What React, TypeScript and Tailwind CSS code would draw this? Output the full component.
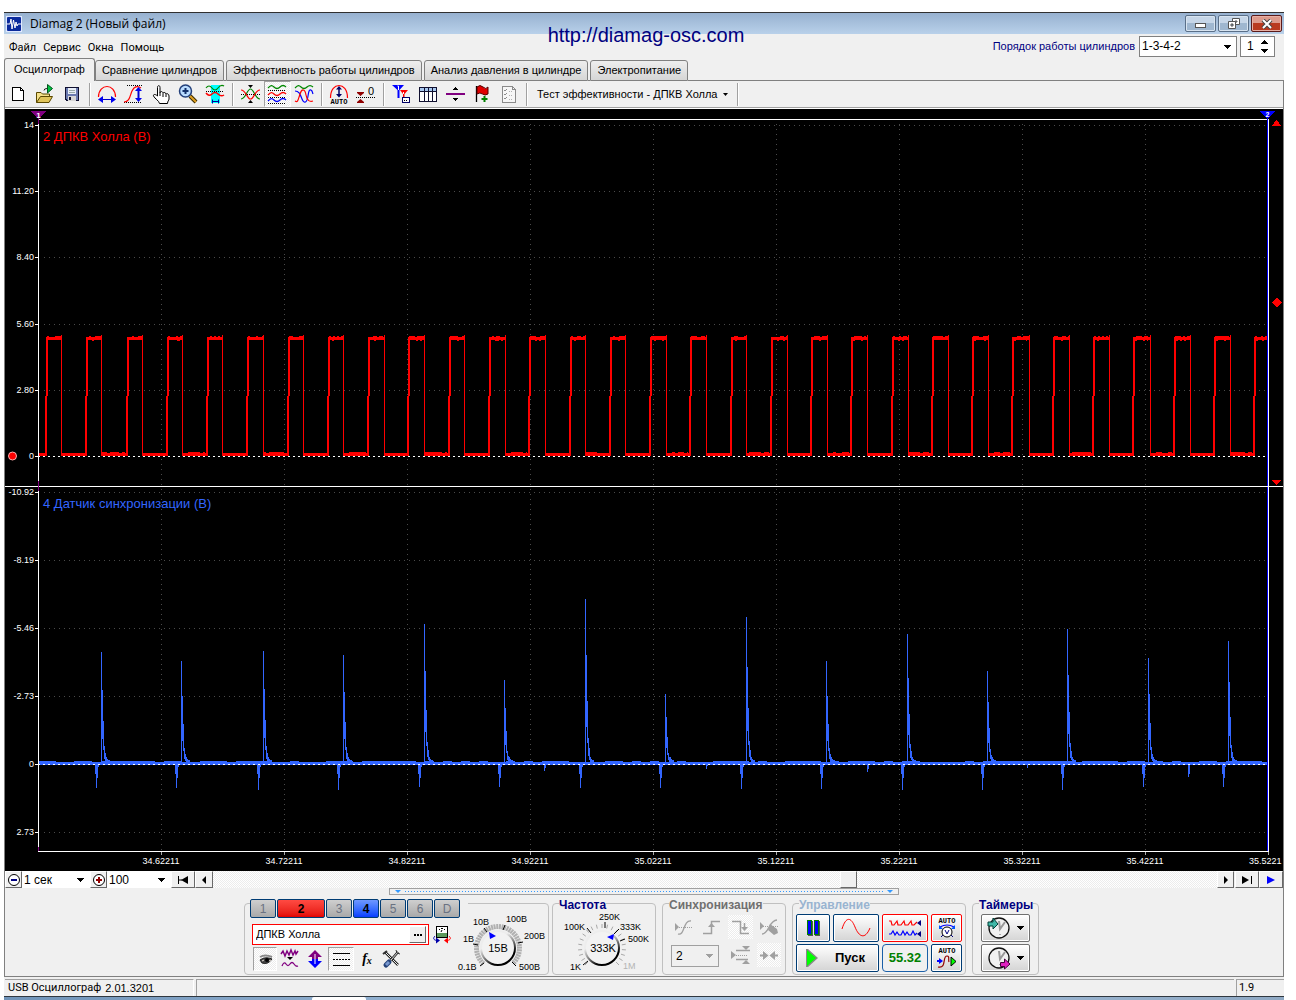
import React, { useState } from 'react';

const ui = 'font-["Liberation_Sans",Arial,sans-serif]';
const segoe = 'font-["Open_Sans","Noto_Sans",sans-serif]';
const tahoma = 'font-[Roboto,"Noto_Sans",sans-serif]';
const mono = 'font-["Liberation_Mono",monospace]';
const dither = 'bg-[repeating-conic-gradient(#ffffff_0_25%,#ececec_0_50%)] bg-size-[2px_2px]';

const menuItems = ['Файл', 'Сервис', 'Окна', 'Помощь'];

const tabs = [
    'Осциллограф',
    'Сравнение цилиндров',
    'Эффективность работы цилиндров',
    'Анализ давления в цилиндре',
    'Электропитание',
];

const channels = [
    { name: '1', look: 'w-[26px] text-gray-500 from-[#cfcfcf] to-[#a9a9a9]' },
    { name: '2', look: 'w-12 font-bold text-black from-[#ff4a42] to-[#e30000]' },
    { name: '3', look: 'w-[26px] text-gray-500 from-[#cfcfcf] to-[#a9a9a9]' },
    { name: '4', look: 'w-[26px] font-bold text-black from-[#6f97ff] to-[#0a3cff]' },
    { name: '5', look: 'w-[26px] text-gray-500 from-[#cfcfcf] to-[#a9a9a9]' },
    { name: '6', look: 'w-[26px] text-gray-500 from-[#cfcfcf] to-[#a9a9a9]' },
    { name: 'D', look: 'w-[26px] text-gray-500 from-[#cfcfcf] to-[#a9a9a9]' },
];

/* ---------- toolbar icons, all on a 24x24 field ---------- */

const Icon = ({ children, crisp = true, className = 'h-6 w-6' }: { children: React.ReactNode; crisp?: boolean; className?: string }) => (
    <svg viewBox="0 0 24 24" className={className} fill="none" shapeRendering={crisp ? 'crispEdges' : 'auto'} aria-hidden="true">
        {children}
    </svg>
);

const NewIcon = () => (
    <Icon>
        <path d="M6.5 5.5H14.5L17.5 8.5V18.5H6.5Z" fill="#fff" stroke="#000" />
        <path d="M14.5 5.5V8.5H17.5" stroke="#000" />
    </Icon>
);

const OpenIcon = () => (
    <Icon crisp={false}>
        <path d="M3.5 20.5V10.5H8L9.5 12H16.5V14" fill="#f4e08a" stroke="#5a4800" />
        <path d="M3.5 20.5L7.5 14.5H19.5L16 20.5Z" fill="#e0c45a" stroke="#5a4800" />
        <path d="M11 8.5Q11 6.500 14 6.500" stroke="#222" />
        <path d="M14.500 2.500V11L19.500 6.500Z" fill="#00c040" stroke="#00551b" />
    </Icon>
);

const SaveIcon = () => (
    <Icon>
        <path d="M5.5 5.5H18.5V18.5H7L5.5 17Z" fill="#6a7ab0" stroke="#101030" />
        <rect x="8" y="6" width="8" height="6" fill="#e8eef8" />
        <path d="M9 8.5H15M9 10.5H15" stroke="#9aa" />
        <rect x="8" y="14" width="8" height="5" fill="#d6d6d6" />
        <rect x="9" y="15" width="2" height="3" fill="#101030" />
    </Icon>
);

const WidthIcon = () => (
    <Icon crisp={false}>
        <path d="M3.500 15C3.500 8 8 4.500 12 4.500S20.500 8 20.500 15" stroke="#f00" strokeWidth="1.200" />
        <path d="M6 17.500H18" stroke="#00c" />
        <path d="M3 17.500L8 14V21ZM21 17.500L16 14V21Z" fill="#00e" />
    </Icon>
);

const HeightIcon = () => (
    <Icon crisp={false}>
        <path d="M5 3.500H21M2 20.500H20" stroke="#000" strokeDasharray="1 1" />
        <path d="M2 20C8 20 8 13 10 9C12 5 15 3 19 6" stroke="#f00" strokeWidth="1.200" />
        <path d="M16.500 8V18" stroke="#00c" strokeWidth="2" />
        <path d="M16.500 5L13 9H20ZM16.500 20L13 16H20Z" fill="#00e" />
    </Icon>
);

const HandIcon = () => (
    <Icon crisp={false}>
        <path
            d="M8.500 14V5.500C8.500 3 11 3 11 5.500V11C11 9 14 9 14 11.500C14 10 17 10 17 12.500C17 11 20 11.500 20 14V17C20 18.500 18.500 19 18.500 21.500H10.500C10 18.500 6 17 4.500 14C4 12 6.500 12 8.500 14Z"
            fill="#fff"
            stroke="#000"
        />
        <path d="M11 11V14M14 12V15M17 13V15" stroke="#000" />
    </Icon>
);

const ZoomIcon = () => (
    <Icon crisp={false}>
        <path d="M14 14L20 20" stroke="#3a2c00" strokeWidth="4" />
        <path d="M14 14L20 20" stroke="#e0a020" strokeWidth="2" />
        <circle cx="9.500" cy="9" r="6" fill="#b9dcff" stroke="#23407a" strokeWidth="1.500" />
        <path d="M9.500 6V12M6.500 9H12.500" stroke="#13306a" strokeWidth="2" />
    </Icon>
);

const RangeIcon = () => (
    <Icon crisp={false}>
        <rect x="8" y="3" width="9" height="18" fill="#0ff" />
        <path d="M3 6Q6 2 9 6T15 6T21 4" stroke="#080" strokeWidth="1.200" />
        <path d="M3 9.500H21" stroke="#000" strokeDasharray="1 1" />
        <path d="M3 11Q6 15 9 12T15 12T21 13" stroke="#f00" strokeWidth="1.500" />
        <path d="M9 19.500H16M9.500 17.500V21.500M15.500 17.500V21.500" stroke="#009" />
    </Icon>
);

const CrossIcon = () => (
    <Icon crisp={false}>
        <path d="M3 12.500H22" stroke="#000" strokeDasharray="1 1" />
        <path d="M3 17C8 17 9 7 12.500 7S17 17 22 17" stroke="#080" strokeWidth="1.200" />
        <path d="M3 8C8 8 9 17 12.500 17S17 8 22 8" stroke="#f00" strokeWidth="1.200" />
        <path d="M10 3H15L12.500 6ZM10 21H15L12.500 18Z" fill="#000" />
    </Icon>
);

const StackIcon = () => (
    <Icon crisp={false}>
        <path d="M3 8.500H21M3 15.500H21M3 21.500H21" stroke="#000" strokeDasharray="1 1" />
        <path d="M3 6C6 3 7 3 9 5S13 7 15 5S19 3 21 5" stroke="#080" strokeWidth="1.300" />
        <path d="M3 13C6 10 7 10 9 12S13 14 15 12S19 10 21 12" stroke="#f00" strokeWidth="1.300" />
        <path d="M3 19C6 16 7 16 9 18S13 20 15 18S19 16 21 18" stroke="#00f" strokeWidth="1.300" />
    </Icon>
);

const OverlayIcon = () => (
    <Icon crisp={false}>
        <path d="M3 6C6 3 7 3 9 5S13 7 15 5S19 3 21 5" stroke="#080" strokeWidth="1.200" />
        <path d="M3 9C7 9 8 12 10 17S15 21 16 14S18 7 20 9L21 12" stroke="#00f" strokeWidth="1.200" />
        <path d="M3 19C6 21 6 18 8 12S13 7 14 13S18 20 21 19" stroke="#f00" strokeWidth="1.200" />
    </Icon>
);

const AutoIcon = () => (
    <Icon crisp={false}>
        <path d="M3.500 16C3.500 7 8 3.500 12 3.500S20.500 7 20.500 16" stroke="#f00" strokeWidth="1.200" />
        <path d="M12 6V14" stroke="#006" strokeWidth="1.500" />
        <path d="M12 4L9 7.500H15ZM12 15.500L9 12H15Z" fill="#006" />
        <text x="12" y="22" textAnchor="middle" fontSize="7" fontWeight="bold" fill="#000" className={mono}>AUTO</text>
    </Icon>
);

const ZeroIcon = () => (
    <Icon crisp={false}>
        <path d="M2 15.500H21" stroke="#000" strokeDasharray="1 1" />
        <path d="M3 10H10V11L6.500 14L3 11ZM3 21H10V20L6.500 17L3 20Z" fill="#900000" />
        <text x="14" y="13" fontSize="11" fill="#000" className={ui}>0</text>
    </Icon>
);

const MarkersIcon = () => (
    <Icon crisp={false}>
        <path d="M3 3H15L10.500 8V16H8.500V8Z" fill="#00f" />
        <path d="M11 8H19L15.500 12V18H14V12Z" fill="#f00" />
        <path d="M8.500 4H9.500V8" stroke="#fff" />
        <path d="M14.500 10V12" stroke="#fff" />
        <rect x="13.500" y="15.500" width="7" height="5" fill="#fff" stroke="#006" />
        <path d="M15 18.500H19" stroke="#000" strokeDasharray="1 1" />
    </Icon>
);

const TableIcon = () => (
    <Icon>
        <rect x="3.500" y="5.500" width="17" height="14" fill="#fff" stroke="#101030" />
        <rect x="4" y="6" width="16" height="3" fill="#a8c8f0" />
        <path d="M4 9.500H20M8.500 6V19M12.500 6V19M16.500 6V19" stroke="#101030" />
    </Icon>
);

const DividerIcon = () => (
    <Icon>
        <rect x="3" y="11" width="19" height="2" fill="#800080" />
        <path d="M10 8H15L12.500 5ZM10 16H15L12.500 19Z" fill="#000" />
    </Icon>
);

const FlagIcon = () => (
    <Icon crisp={false}>
        <path d="M6.500 4V20" stroke="#000" strokeWidth="1.300" />
        <path d="M7 5Q10 2 13 5T18 5V12Q15 14 12.500 12T7 12Z" fill="#e00000" stroke="#500" />
        <path d="M14.500 14V20M11.500 17H17.500" stroke="#008000" strokeWidth="2" />
    </Icon>
);

const ChecklistIcon = () => (
    <Icon>
        <path d="M5.500 4.500H15.500L18.500 7.500V20.500H5.500Z" fill="#f6f6f6" stroke="#8a8a8a" />
        <path d="M15.500 4.500V7.500H18.500" stroke="#8a8a8a" />
        <path d="M7 8L8 9L10 7M7 12L8 13L10 11M7 16L8 17L10 15" stroke="#8a8a8a" />
        <path d="M12 9.500H16M12 13.500H16M12 17.500H16" stroke="#b0b0b0" strokeDasharray="1 1" />
    </Icon>
);

const toolGroups = [
    [
        { label: 'Новый', icon: <NewIcon /> },
        { label: 'Открыть', icon: <OpenIcon /> },
        { label: 'Сохранить', icon: <SaveIcon /> },
    ],
    [
        { label: 'Масштаб по времени', icon: <WidthIcon /> },
        { label: 'Масштаб по амплитуде', icon: <HeightIcon /> },
        { label: 'Перемещение', icon: <HandIcon /> },
        { label: 'Увеличение', icon: <ZoomIcon /> },
        { label: 'Выделение', icon: <RangeIcon /> },
    ],
    [
        { label: 'По центру', icon: <CrossIcon /> },
        { label: 'Раздельно', icon: <StackIcon />, pressed: true },
        { label: 'Совместно', icon: <OverlayIcon /> },
    ],
    [
        { label: 'Автомасштаб', icon: <AutoIcon /> },
        { label: 'Установить ноль', icon: <ZeroIcon /> },
    ],
    [
        { label: 'Маркеры', icon: <MarkersIcon /> },
        { label: 'Таблица', icon: <TableIcon /> },
        { label: 'Разделитель', icon: <DividerIcon /> },
        { label: 'Добавить метку', icon: <FlagIcon /> },
        { label: 'Отчёт', icon: <ChecklistIcon /> },
    ],
];

const Caret = ({ className = 'fill-black' }: { className?: string }) => (
    <svg viewBox="0 0 7 4" className={`h-1 w-[7px] ${className}`} shapeRendering="crispEdges" aria-hidden="true">
        <path d="M0 0H7L3.500 4Z" />
    </svg>
);

const Separator = () => (
    <div className="flex w-2 shrink-0 justify-center py-0.5">
        <div className="w-0.5 border-l border-[#a0a0a0] bg-white" />
    </div>
);

/* ---------- scope ---------- */

const timeMarks = [161, 284, 407, 530, 653, 776, 899, 1022, 1145, 1268];
const timeLabels = ['34.62211', '34.72211', '34.82211', '34.92211', '35.02211', '35.12211', '35.22211', '35.32211', '35.42211', '35.5221'];

const levels = [
    { y: 125, label: '14' },
    { y: 191, label: '11.20' },
    { y: 257, label: '8.40' },
    { y: 324, label: '5.60' },
    { y: 390, label: '2.80' },
    { y: 456, label: '0', zero: true },
    { y: 492, label: '-10.92' },
    { y: 560, label: '-8.19' },
    { y: 628, label: '-5.46' },
    { y: 696, label: '-2.73' },
    { y: 764, label: '0', zero: true },
    { y: 832, label: '2.73' },
];

const spikes = [
    [101, 652], [181, 661], [263, 651], [343, 655], [424, 624], [504, 680], [585, 599], [665, 694],
    [746, 617], [826, 661], [907, 634], [987, 671], [1067, 629], [1148, 658], [1228, 641],
];

const smallDips = [[544, 771], [706, 769], [867, 772], [1027, 768], [1188, 777]];

const hallPulses = Array.from({ length: 31 }, (_, k) => ({
    rise: Math.round(46 + 40.27 * k),
    fall: Math.min(Math.round(61 + 40.32 * k), 1267),
}));

const noise = (n: number) => {
    const v = Math.sin(n * 12.9898) * 43758.5453;
    return v - Math.floor(v);
};

// one-pixel thickening on a flat part of a trace, in runs of `run` pixels
const bumps = (from: number, to: number, y: number, run: number, share: number) => {
    let d = '';
    for (let x = from; x < to; x += run) {
        if (noise(x + y) < share) d += `M${x} ${y}h${Math.min(run, to - x)}v1h-${Math.min(run, to - x)}z`;
    }
    return d;
};

const hallPath = () => {
    let d = 'M38 453H46V456H38Z';
    hallPulses.forEach(({ rise, fall }, k) => {
        d += `M${rise - 1} 396h2V456h-2z`;
        d += `M${rise} 338h2V396h-2z`;
        d += `M${rise} 337H${fall}V340H${rise}Z` + bumps(rise + 1, fall, 336, 2, 0.6) + bumps(rise, fall - 2, 340, 2, 0.2);
        if (fall < 1267) {
            const next = hallPulses[k + 1].rise;
            d += `M${fall} 335h1V456h-1z`;
            d += `M${fall} 453H${next}V456H${fall}Z`;
            if (k % 2) d += bumps(fall + (k % 4 === 1 ? 0 : 6), next - 2, 452, 3, 0.75);
        }
    });
    return d;
};

const syncPath = () => {
    let d = 'M38 762H1267V765H38Z' + bumps(38, 1267, 761, 9, 0.6);
    spikes.forEach(([x, top]) => {
        const h = 763 - top;
        const bar = (dx: number, a: number, b: number) => `M${x + dx} ${Math.round(763 - h * a)}h1V${Math.round(763 - h * b)}h-1z`;
        d += bar(0, 1, 0) + bar(1, 0.66, 0.22) + bar(2, 0.38, 0.12) + bar(3, 0.15, 0.04) + bar(4, 0.09, 0.02);
        d += `M${x + 5} 757h1v5h-1zM${x + 6} 759h1v3h-1zM${x + 7} 760h2v2h-2z`;
        d += `M${x - 6} 763h1V774h-1zM${x - 5} 763h1V${787 + (x % 4)}h-1zM${x - 4} 763h1V778h-1zM${x - 3} 763h1V767h-1z`;
    });
    smallDips.forEach(([x, bottom]) => {
        d += `M${x} 763h1V${bottom}h-1zM${x + 1} 763h1V${bottom - 3}h-1z`;
    });
    return d;
};

const Scope = () => (
    <svg viewBox="5 109 1278 762" className={`block h-auto w-full bg-black ${ui}`} role="img" aria-label="Осциллограмма">
        <g shapeRendering="crispEdges">
            {levels.map(({ y, zero }) => !zero && (
                <path key={y} d={`M44 ${y + 0.5}H1267`} stroke="#4a4a4a" strokeDasharray="1 4" />
            ))}
            {timeMarks.slice(0, 9).map((x) => (
                <path key={x} d={`M${x + 0.5} 124V850`} stroke="#4a4a4a" strokeDasharray="1 4" />
            ))}
            <path d={hallPath()} fill="#ff0000" />
            <path d={syncPath()} fill="#3366ff" />
            <path d="M38 456.500H1267M38 764.500H1267" stroke="#fff" strokeDasharray="2 3" />
            <path d="M38 119.500H1269M5 486.500H1283M38 851.500H1269M38.500 119V851M1268.500 119V851" stroke="#fff" />
            <path d="M1267.500 116V486M1267.500 487V851" stroke="#0000ff" />
            <path d="M38.500 115V124M38.500 481V491M38.500 847V851" stroke="#800080" />
            {timeMarks.map((x) => (
                <path key={x} d={`M${x + 0.5} 852V855`} stroke="#aaa" />
            ))}
            {levels.map(({ y }) => (
                <path key={y} d={`M35 ${y + 0.5}H38`} stroke="#fff" />
            ))}
            <path d="M31 111H46L39 119H38Z" fill="#800080" />
            <path d="M1260 111H1275L1268 119H1267Z" fill="#0000ff" />
            <path d="M1272 125.500L1276.500 120L1281 125.500Z" fill="#ff0000" />
            <path d="M1271.500 302.500L1276.500 297.500L1281.500 302.500L1276.500 307.500Z" fill="#ff0000" />
            <path d="M1272 480L1276.500 485.500L1281 480Z" fill="#ff0000" />
        </g>
        <circle cx="12.500" cy="456" r="4" fill="#ff0000" stroke="#ffb0b0" />
        <text x="38.500" y="118" fontSize="8" fontWeight="bold" fill="#fff" textAnchor="middle">1</text>
        <text x="1267.500" y="117" fontSize="7" fontWeight="bold" fill="#fff" textAnchor="middle">2</text>
        <g fontSize="9" fill="#fff">
            {levels.map(({ y, label }) => (
                <text key={y} x="34" y={y + 3} textAnchor="end">{label}</text>
            ))}
            {timeLabels.map((label, i) => (
                <text key={label} x={i === 9 ? 1249 : timeMarks[i]} y="864" textAnchor={i === 9 ? 'start' : 'middle'}>{label}</text>
            ))}
        </g>
        <text x="43" y="141" fontSize="13" fill="#ff0000">2 ДПКВ Холла (В)</text>
        <text x="43" y="508" fontSize="13" fill="#3366ff">4 Датчик синхронизации (В)</text>
    </svg>
);

/* ---------- knobs ---------- */

const ring = (cx: number, cy: number, r1: number, r2: number, step: number) => {
    let d = '';
    for (let a = -225; a <= 45; a += step) {
        const c = Math.cos((a * Math.PI) / 180);
        const s = Math.sin((a * Math.PI) / 180);
        d += `M${(cx + r1 * c).toFixed(1)} ${(cy + r1 * s).toFixed(1)}L${(cx + r2 * c).toFixed(1)} ${(cy + r2 * s).toFixed(1)}`;
    }
    return d;
};

const KnobFace = ({ cx, cy }: { cx: number; cy: number }) => (
    <>
        <defs>
            <linearGradient id={`rim${cx}`} x1="0.200" y1="0" x2="0.800" y2="1">
                <stop offset="0.300" stopColor="#ededed" />
                <stop offset="0.500" stopColor="#999" />
                <stop offset="0.800" stopColor="#000" />
            </linearGradient>
        </defs>
        <circle cx={cx} cy={cy} r="17" fill="#f2f2f2" stroke={`url(#rim${cx})`} strokeWidth="2" />
    </>
);

const VoltKnob = () => (
    <svg viewBox="456 909 90 63" className={`mt-[5px] h-[63px] w-[90px] shrink-0 ${ui}`} role="img" aria-label="Диапазон 15В">
        <path d={ring(498, 948, 19, 24, 7)} stroke="#b0b0b0" strokeWidth="2" />
        <path d="M480 966L484 963M473 944L478 945M484 928L487 932M505 925L503 930M523 942L518 943M516 966L512 962" stroke="#000" />
        <KnobFace cx={498} cy={948} />
        <path d="M489 932L496 936L490 939Z" fill="#0000ff" />
        <g fontSize="9" fill="#000">
            <text x="458" y="970">0.1В</text>
            <text x="463" y="942">1В</text>
            <text x="473" y="925">10В</text>
            <text x="506" y="922">100В</text>
            <text x="524" y="939">200В</text>
            <text x="519" y="970">500В</text>
        </g>
        <text x="498" y="952" fontSize="11" textAnchor="middle">15В</text>
    </svg>
);

const FreqKnob = () => (
    <svg viewBox="556 911 97 62" className={`ml-[3px] h-[62px] w-[97px] ${ui}`} role="img" aria-label="Частота 333K">
        <path d={ring(602, 948, 20, 24, 13.500)} stroke="#a8a8a8" />
        <path d="M583 965L588 961M587 928L591 933M605 922V928M619 929L614 934M625 939L620 941" stroke="#000" />
        <KnobFace cx={602} cy={948} />
        <path d="M607 937L614 934L613 940Z" fill="#0000ff" />
        <g fontSize="9" fill="#000">
            <text x="570" y="970">1K</text>
            <text x="564" y="930">100K</text>
            <text x="599" y="920">250K</text>
            <text x="620" y="930">333K</text>
            <text x="628" y="942">500K</text>
            <text x="623" y="969" fill="#b4b4b4">1M</text>
        </g>
        <text x="603" y="952" fontSize="11" textAnchor="middle">333K</text>
    </svg>
);

/* ---------- bottom panel ---------- */

const Group = ({ title, color, className, children }: { title: string; color: string; className: string; children: React.ReactNode }) => (
    <fieldset className={`h-[79px] shrink-0 rounded border border-[#c0c0c0] ${className}`}>
        <legend className={`ml-1.5 pt-[3px] text-xs leading-3 font-bold whitespace-nowrap ${color}`}>{title}</legend>
        {children}
    </fieldset>
);

const faceButton = 'flex h-7 items-center justify-center rounded-[2px] border bg-linear-to-b from-white to-[#d4d4d4] shadow-[inset_0_0_0_1px_#ffffff]';

const ChannelGroup = () => {
    const [name, setName] = useState('ДПКВ Холла');
    return (
        <div className="mt-2 flex h-[72px] w-[305px] shrink-0 rounded border border-[#c0c0c0] pl-[5px]">
            <div className="w-[206px] shrink-0">
                <div className="relative -mt-[5px] flex w-[218px] gap-px bg-[#f0f0f0]">
                    {channels.map((c) => (
                        <button
                            key={c.name}
                            className={`h-[19px] rounded-[2px] border border-[#003c74] bg-linear-to-b text-xs leading-none ${c.look}`}
                        >
                            {c.name}
                        </button>
                    ))}
                </div>
                <div className="mt-1.5 flex items-center gap-1 pl-0.5">
                    <div className="flex h-[21px] w-[177px] items-center border border-[#ff0000] bg-white pr-0.5">
                        <input
                            aria-label="Имя канала"
                            className="min-w-0 flex-1 pl-[3px] text-[11px] outline-none"
                            value={name}
                            onChange={(e) => setName(e.target.value)}
                        />
                        <button
                            aria-label="Выбрать"
                            className="flex h-[17px] w-[17px] items-center justify-center gap-px border border-r-[#696969] border-b-[#696969] border-l-white border-t-white bg-[#f0f0f0]"
                        >
                            <svg viewBox="0 0 8 2" className="h-0.5 w-2" aria-hidden="true">
                                <path d="M0 0H2V2H0ZM3 0H5V2H3ZM6 0H8V2H6Z" />
                            </svg>
                        </button>
                    </div>
                    <button aria-label="Датчик">
                        <svg viewBox="0 0 18 20" className="h-5 w-[18px]" fill="none" aria-hidden="true">
                            <rect x="3.500" y="1.500" width="11" height="11" fill="#fff" stroke="#000" />
                            <rect x="4" y="8" width="10" height="4" fill="#5c9a5c" />
                            <path d="M6 4.500H7M8 3.500H10M11 4.500H12M8 7L9 5" stroke="#000" />
                            <path d="M2 11C0 13 0 15 4 15.500" stroke="#00a" />
                            <path d="M3 12.500L7 15.500L3 18.500Z" fill="#00a" />
                            <path d="M16 11C18 13 18 15 14 15.500" stroke="#f00" />
                            <path d="M15 12.500L11 15.500L15 18.500Z" fill="#f00" />
                        </svg>
                    </button>
                </div>
                <div className="mt-0.5 flex h-6 items-center gap-px pl-[3px]">
                    <button aria-label="Показать канал" className={`h-6 w-6 border border-t-[#a0a0a0] border-l-[#a0a0a0] border-r-white border-b-white ${dither}`}>
                        <svg viewBox="0 0 22 22" className="h-full w-full" fill="none" aria-hidden="true">
                            <path d="M6 9Q11 6 18 9" stroke="#888" strokeWidth="2" />
                            <path d="M6 12Q11 8 18 11Q14 17 8 15Z" fill="#444" stroke="#222" />
                            <circle cx="13" cy="12" r="2" fill="#000" />
                            <path d="M8 13L10 12M15 13L17 12" stroke="#e8e0d8" />
                        </svg>
                    </button>
                    <button aria-label="Фильтр">
                        <Icon crisp={false}>
                            <path d="M3 7L5 4L7 9L9 4L11 8L13 3L15 8L17 4L18 7L20 4" stroke="#800080" strokeWidth="1.500" />
                            <path d="M9 10H15L12 13Z" fill="#000" />
                            <path d="M4 19Q6 14 8 17T12 17T16 17T20 19" stroke="#800080" strokeWidth="1.300" />
                        </Icon>
                    </button>
                    <button aria-label="Инвертировать">
                        <Icon crisp={false}>
                            <path d="M12 3L19 10H15V12H9V10H5Z" fill="#800080" />
                            <path d="M12 21L19 14H15V12H9V14H5Z" fill="#0000ff" />
                            <path d="M12 7V17" stroke="#fff" />
                        </Icon>
                    </button>
                    <button aria-label="Линии" className={`h-6 w-[26px] border border-t-[#a0a0a0] border-l-[#a0a0a0] border-r-white border-b-white ${dither}`}>
                        <svg viewBox="0 0 24 22" className="h-full w-full" shapeRendering="crispEdges" aria-hidden="true">
                            <path d="M4 5.500H21M4 17.500H21" stroke="#000" />
                            <path d="M4 11.500H21" stroke="#000" strokeDasharray="2 1" />
                        </svg>
                    </button>
                    <button aria-label="Функция" className='flex h-6 w-6 items-center justify-center font-["Liberation_Serif",serif] text-sm font-bold italic'>
                        f<span className="mt-1 text-[10px]">x</span>
                    </button>
                    <button aria-label="Настройки">
                        <Icon crisp={false}>
                            <path d="M5 5L18 18" stroke="#222" strokeWidth="2.500" />
                            <path d="M5 5L18 18" stroke="#eee" />
                            <path d="M3 7L7 4" stroke="#333" strokeWidth="2" />
                            <path d="M18 5L11 13" stroke="#222" strokeWidth="2.500" />
                            <path d="M18 5L11 13" stroke="#ddd" />
                            <path d="M16 3L17 6L20 7" stroke="#333" />
                            <path d="M9 15L6 18" stroke="#24427a" strokeWidth="5" strokeLinecap="round" />
                            <path d="M9 15L6 18" stroke="#7898d0" strokeWidth="3" />
                        </Icon>
                    </button>
                </div>
            </div>
            <VoltKnob />
        </div>
    );
};

const SyncGroup = () => (
    <Group title="Синхронизация" color="text-[#707070]" className="w-[124px]">
        <div className="grid grid-cols-4 gap-x-1 gap-y-1 pt-1 pr-1 pl-2">
            <button disabled aria-label="Уровень">
                <Icon crisp={false}>
                    <path d="M4 8V16L8 12Z" fill="#a0a0a0" />
                    <path d="M6 12.500H21" stroke="#a0a0a0" strokeDasharray="1 1" />
                    <path d="M7 19C14 21 12 5 20 6" stroke="#a0a0a0" strokeWidth="1.300" />
                </Icon>
            </button>
            <button disabled aria-label="По фронту">
                <Icon crisp={false}>
                    <path d="M3 18.500H11.500V6.500H20" stroke="#a0a0a0" strokeWidth="1.500" />
                    <path d="M8 12H15L11.500 8Z" fill="#a0a0a0" />
                </Icon>
            </button>
            <button disabled aria-label="По спаду" className={dither}>
                <Icon crisp={false}>
                    <path d="M4 6.500H12.500V18.500H21M16.500 8V14" stroke="#a0a0a0" strokeWidth="1.500" />
                    <path d="M13 12H20L16.500 16Z" fill="#a0a0a0" />
                </Icon>
            </button>
            <button disabled aria-label="Указать">
                <Icon crisp={false}>
                    <path d="M3 7V15L7 11ZM13 9L20 14L21 18L17 20L11 15Z" fill="#a0a0a0" />
                    <path d="M6 11.500H21" stroke="#a0a0a0" strokeDasharray="1 1" />
                    <path d="M5 19C12 19 12 5 20 5" stroke="#a0a0a0" strokeWidth="1.300" />
                </Icon>
            </button>
            <div className="relative col-span-2 mt-0.5 h-[22px] w-12">
                <select disabled aria-label="Канал синхронизации" className="h-full w-full appearance-none border border-[#a0a0a0] bg-[#f0f0f0] pl-1 text-xs text-black opacity-100">
                    <option>2</option>
                </select>
                <span className="pointer-events-none absolute top-[9px] right-1.5 flex"><Caret className="fill-[#a0a0a0]" /></span>
            </div>
            <button disabled aria-label="Диапазон">
                <Icon crisp={false}>
                    <path d="M3 8V16L8 12ZM14 3H22L18 7ZM14 21H22L18 17Z" fill="#a0a0a0" />
                    <path d="M8 7.500H22M8 16.500H20" stroke="#a0a0a0" strokeWidth="1.500" />
                    <path d="M8 12.500H20" stroke="#a0a0a0" strokeDasharray="1 1" />
                </Icon>
            </button>
            <button disabled aria-label="По центру" className={dither}>
                <Icon crisp={false}>
                    <path d="M3 12.500H9M15 12.500H21" stroke="#a0a0a0" strokeWidth="2" />
                    <path d="M6 8L11.500 12.500L6 17ZM18 8L12.500 12.500L18 17Z" fill="#a0a0a0" />
                </Icon>
            </button>
        </div>
    </Group>
);

const ControlGroup = () => (
    <Group title="Управление" color="text-[#99b4d1]" className="w-[174px]">
        <div className="grid grid-cols-[34px_46px_46px_31px] gap-x-[3px] gap-y-0.5 pt-[3px] pl-[3px]">
            <button aria-label="Пауза" className={`${faceButton} border-[#003c74]`}>
                <svg viewBox="0 0 13 16" className="h-4 w-[13px]" shapeRendering="crispEdges" aria-hidden="true">
                    <path d="M1 1H6V16H1ZM8 1H13V16H8Z" fill="#555" />
                    <path d="M0 0H5V15H0ZM7 0H12V15H7Z" fill="#008000" />
                    <path d="M1 1H4V14H1ZM8 1H11V14H8Z" fill="#0000ff" />
                </svg>
            </button>
            <button aria-label="Сигнал" className={`${faceButton} border-[#003c74]`}>
                <svg viewBox="0 0 30 20" className="h-5 w-[30px]" fill="none" aria-hidden="true">
                    <path d="M1 11C5 -2 10 -1 14 9S24 22 29 10" stroke="#ff0000" />
                </svg>
            </button>
            <button aria-label="Каналы" className={`${faceButton} border-[#ff0000]`}>
                <svg viewBox="0 0 34 20" className="h-5 w-[34px]" fill="none" aria-hidden="true">
                    <path d="M1 3H3L4 7H6L9 3L10 7H13L16 3L17 7H20L23 3L24 7H26L29 4" stroke="#ff0000" strokeWidth="1.200" />
                    <path d="M1 16H3L5 13L7 17L9 14L11 17H13L15 13L17 17L19 14L21 17H23L25 13L27 17L29 15" stroke="#0000ff" strokeWidth="1.200" />
                    <path d="M33 2V8L29 5ZM33 13V19L29 16Z" fill="#000080" />
                </svg>
            </button>
            <button aria-label="Авто диапазон" className={`${faceButton} border-[#ff0000]`}>
                <svg viewBox="0 0 24 24" className="h-6 w-6" fill="none" aria-hidden="true">
                    <text x="12" y="7" fontSize="7" fontWeight="bold" fill="#000" textAnchor="middle" className={mono}>AUTO</text>
                    <path d="M5 11Q12 7 19 11" stroke="#0000ff" strokeWidth="1.200" />
                    <path d="M4 9V13H8ZM20 9V13H16Z" fill="#0055ff" />
                    <circle cx="12" cy="16" r="5" fill="#fff" stroke="#000" />
                    <path d="M10 14L12 18L14 14M6 21L8 19M18 21L16 19" stroke="#000080" />
                </svg>
            </button>
            <button className={`${faceButton} col-span-2 border-[#003c74] pr-1 text-[13px] font-bold`}>
                <svg viewBox="0 0 12 18" className="mr-[17px] h-[18px] w-3" aria-hidden="true">
                    <path d="M0 0H2L12 9L2 18H0Z" fill="#888" />
                    <path d="M1 1L10 9L1 17Z" fill="#00ff00" />
                </svg>
                Пуск
            </button>
            <output className="flex h-7 items-center justify-center rounded border border-[#1a5fa8] text-[13px] font-bold text-[#008000]">55.32</output>
            <button aria-label="Авто запуск" className={`${faceButton} border-[#003c74]`}>
                <svg viewBox="0 0 24 24" className="h-6 w-6" fill="none" aria-hidden="true">
                    <text x="12" y="7" fontSize="7" fontWeight="bold" fill="#000" textAnchor="middle" className={mono}>AUTO</text>
                    <path d="M2 15H6" stroke="#0000ff" strokeWidth="2" />
                    <path d="M4 12V18L8 15Z" fill="#0000ff" />
                    <path d="M3 21C12 23 7 10 12 10C15 10 13 14 14 16" stroke="#900000" strokeWidth="1.200" />
                    <path d="M16 11V20L21 15.500Z" fill="#00ff00" stroke="#000" />
                </svg>
            </button>
        </div>
    </Group>
);

const TimerButton = ({ label, out }: { label: string; out?: boolean }) => (
    <button aria-label={label} className={`${faceButton} w-[49px] gap-1 border-[#707070]`}>
        <svg viewBox="0 0 26 24" className="h-6 w-[26px]" fill="none" aria-hidden="true">
            <circle cx="12" cy="12" r="10" fill="#f0f0f0" stroke="#111" strokeWidth="1.300" />
            <path d="M12 5L13 13L18 6" stroke="#999" strokeWidth="2" />
            <path d="M12 18.500H14" stroke="#aaa" />
            {out ? (
                <path d="M13.500 16.500H17.500V13L23 18L17.500 23V20.500H13.500Z" fill="#e020c0" stroke="#400038" />
            ) : (
                <path d="M1 6H6V2L11 8L6 13V10H1Z" fill="#40b8a8" stroke="#004038" />
            )}
        </svg>
        <Caret />
    </button>
);

const scrollButton = 'flex h-[17px] shrink-0 items-center justify-center border border-t-white border-l-white border-r-[#696969] border-b-[#696969] bg-[#f0f0f0]';

const ScrollRow = () => (
    <div className="flex h-[17px] text-xs">
        <button aria-label="Уменьшить" className={`${scrollButton} w-[17px]`}>
            <svg viewBox="0 0 14 14" className="h-3.5 w-3.5 shrink-0" fill="none" aria-hidden="true">
                <circle cx="7" cy="7" r="5.500" fill="#fff" stroke="#000" />
                <path d="M4 7H10" stroke="#000080" strokeWidth="2" />
            </svg>
        </button>
        <div className="relative w-[68px]">
            <select aria-label="Развёртка" className="h-full w-full appearance-none bg-white pl-0.5">
                <option>1 сек</option>
            </select>
            <span className="pointer-events-none absolute top-[7px] right-1.5 flex"><Caret /></span>
        </div>
        <button aria-label="Увеличить" className={`${scrollButton} w-[17px]`}>
            <svg viewBox="0 0 14 14" className="h-3.5 w-3.5 shrink-0" fill="none" aria-hidden="true">
                <circle cx="7" cy="7" r="5.500" fill="#fff" stroke="#000" />
                <path d="M4 7H10M7 4V10" stroke="#900000" strokeWidth="2" />
            </svg>
        </button>
        <div className="relative w-16">
            <select aria-label="Масштаб" className="h-full w-full appearance-none bg-white pl-0.5">
                <option>100</option>
            </select>
            <span className="pointer-events-none absolute top-[7px] right-1.5 flex"><Caret /></span>
        </div>
        <button aria-label="В начало" className={`${scrollButton} w-6`}>
            <svg viewBox="0 0 10 8" className="h-2 w-2.5" aria-hidden="true"><path d="M0 0H1V8H0ZM10 0V8L3 4Z" /><path d="M1 3.500H4V4.500H1Z" /></svg>
        </button>
        <button aria-label="Назад" className={`${scrollButton} w-[18px]`}>
            <svg viewBox="0 0 4 8" className="h-2 w-1" aria-hidden="true"><path d="M4 0V8L0 4Z" /></svg>
        </button>
        <div className={`flex flex-1 ${dither}`}>
            <div className="grow-[627]" />
            <div className={`${scrollButton} w-[17px]`} />
            <div className="grow-[360]" />
        </div>
        <button aria-label="Вперёд" className={`${scrollButton} w-[17px]`}>
            <svg viewBox="0 0 4 8" className="h-2 w-1" aria-hidden="true"><path d="M0 0V8L4 4Z" /></svg>
        </button>
        <button aria-label="В конец" className={`${scrollButton} ml-px w-6`}>
            <svg viewBox="0 0 10 8" className="h-2 w-2.5" aria-hidden="true"><path d="M10 0H9V8H10ZM0 0V8L7 4Z" /></svg>
        </button>
        <button aria-label="Следить" className={`${scrollButton} w-6`}>
            <svg viewBox="0 0 8 8" className="h-2 w-2 fill-[#0000ff]" aria-hidden="true"><path d="M0 0V8L8 4Z" /></svg>
        </button>
    </div>
);

const TitleBar = () => (
    <div className="flex h-[22px] items-center border-t border-[#303030] bg-linear-to-b from-[#97b1d0] to-[#b9d1ea] pr-0.5 pl-0.5">
        <svg viewBox="0 0 16 16" className="h-4 w-4" fill="none" aria-hidden="true">
            <rect width="16" height="16" fill="#dfe8ff" />
            <rect x="1" y="1" width="14" height="14" rx="1" fill="#0a2a9c" />
            <path d="M1 8H4L5 3L6 13L7.500 4L9 12L10 6L11 10L12 8H15" stroke="#fff" />
        </svg>
        <span className={`ml-2 text-xs leading-4 ${segoe}`}>Diamag 2 (Новый файл)</span>
        <div className="ml-auto flex gap-0.5">
            <button aria-label="Свернуть" className="flex h-[17px] w-[31px] items-center justify-center rounded-[2px] border border-[#5a6f88] bg-linear-to-b from-[#c6d6e8] from-50% to-[#9fb7d0] to-50% shadow-[inset_0_0_0_1px_#d8e4f0]">
                <svg viewBox="0 0 11 5" className="mt-1 h-[5px] w-[11px]" aria-hidden="true"><rect x="0.500" y="0.500" width="10" height="4" fill="#fff" stroke="#555" /></svg>
            </button>
            <button aria-label="Восстановить" className="flex h-[17px] w-[31px] items-center justify-center rounded-[2px] border border-[#5a6f88] bg-linear-to-b from-[#c6d6e8] from-50% to-[#9fb7d0] to-50% shadow-[inset_0_0_0_1px_#d8e4f0]">
                <svg viewBox="0 0 12 11" className="h-[11px] w-3" aria-hidden="true">
                    <path d="M4.500 0.500H11.500V6.500H4.500ZM7 3V4H9V3Z" fill="#fff" stroke="#555" />
                    <path d="M0.500 3.500H7.500V10.500H0.500ZM3 6V8H5V6Z" fill="#fff" stroke="#555" />
                </svg>
            </button>
            <button aria-label="Закрыть" className="flex h-[17px] w-[31px] items-center justify-center rounded-[2px] border border-[#5a1a1a] bg-linear-to-b from-[#dd9a8c] from-50% to-[#b93a20] to-50% shadow-[inset_0_0_0_1px_#e8b0a4]">
                <svg viewBox="0 0 12 10" className="h-2.5 w-3" fill="none" aria-hidden="true">
                    <path d="M2 1L10 9M10 1L2 9" stroke="#444" strokeWidth="4" />
                    <path d="M2 1L10 9M10 1L2 9" stroke="#fff" strokeWidth="2" />
                </svg>
            </button>
        </div>
    </div>
);

const App = () => {
    const [activeTab, setActiveTab] = useState(0);
    const [cylinder, setCylinder] = useState(1);

    return (
        <div className={`bg-white pt-3 pr-3 pl-1 text-xs text-black ${ui}`}>
            <div className="relative bg-[#f0f0f0]">
                <TitleBar />
                <a href="http://diamag-osc.com" className="absolute top-[11px] left-1/2 -translate-x-1/2 pl-1 text-xl leading-6 text-[#000080]">
                    http://diamag-osc.com
                </a>

                <div className="flex h-6 items-center">
                    <nav className={`flex gap-[7px] pt-1 pl-[5px] text-[11px] ${tahoma}`}>
                        {menuItems.map((item) => (
                            <button key={item}>{item}</button>
                        ))}
                    </nav>
                    <div className="ml-auto flex items-center pr-[9px]">
                        <label htmlFor="order" className="text-[11px] text-[#000080]">Порядок работы цилиндров</label>
                        <div className="relative ml-1 h-[21px] w-[98px]">
                            <select id="order" className="h-full w-full appearance-none border border-[#808080] bg-white pl-0.5 text-xs">
                                <option>1-3-4-2</option>
                            </select>
                            <span className="pointer-events-none absolute top-[9px] right-1.5 flex"><Caret /></span>
                        </div>
                        <div className="ml-[3px] flex h-[21px] w-[35px] items-center border border-[#808080] bg-white">
                            <input
                                aria-label="Цилиндр"
                                className="w-5 pl-1.5 outline-none"
                                value={cylinder}
                                onChange={(e) => setCylinder(Number(e.target.value) || 1)}
                            />
                            <div className="flex flex-col gap-[5px]">
                                <button aria-label="Больше" className="flex rotate-180" onClick={() => setCylinder(cylinder + 1)}><Caret /></button>
                                <button aria-label="Меньше" className="flex" onClick={() => setCylinder(Math.max(1, cylinder - 1))}><Caret /></button>
                            </div>
                        </div>
                    </div>
                </div>

                <div role="tablist" className="flex h-[23px] items-end text-[11px]">
                    {tabs.map((tab, i) => (
                        <React.Fragment key={tab}>
                            <button
                                role="tab"
                                aria-selected={i === activeTab}
                                onClick={() => setActiveTab(i)}
                                className={i === activeTab
                                    ? 'h-[23px] rounded-t-[3px] border border-b-0 border-[#808080] bg-[#f0f0f0] px-[9px] pb-0.5 whitespace-nowrap'
                                    : 'h-[21px] rounded-t-[3px] border border-[#808080] bg-linear-to-b from-[#eeeeee] to-[#d6d6d6] px-1.5 whitespace-nowrap'}
                            >
                                {tab}
                            </button>
                            <div
                                className={i === tabs.length - 1
                                    ? 'flex-1 border-b border-[#808080]'
                                    : i === activeTab ? 'w-0' : 'w-0.5 border-b border-[#808080]'}
                            />
                        </React.Fragment>
                    ))}
                </div>

                <div className="border-x border-b border-[#808080]">
                    <div className="flex h-7 border-b border-white shadow-[inset_0_-1px_0_#a0a0a0]">
                        {toolGroups.map((group, i) => (
                            <React.Fragment key={i}>
                                {group.map((tool) => (
                                    <button
                                        key={tool.label}
                                        aria-label={tool.label}
                                        className={`flex h-[26px] w-[27px] shrink-0 items-center border ${tool.pressed ? `border-t-[#a0a0a0] border-r-white border-b-white border-l-[#a0a0a0] ${dither}` : 'border-transparent'}`}
                                    >
                                        {tool.icon}
                                    </button>
                                ))}
                                <Separator />
                            </React.Fragment>
                        ))}
                        <button className="flex items-center gap-1.5 px-1.5 text-[11px] whitespace-nowrap">
                            Тест эффективности - ДПКВ Холла
                            <svg viewBox="0 0 5 3" className="h-[3px] w-[5px]" aria-hidden="true"><path d="M0 0H5L2.500 3Z" /></svg>
                        </button>
                        <Separator />
                    </div>

                    <Scope />
                    <ScrollRow />

                    <div className="flex h-[7px] justify-center">
                        <div className="flex w-[510px] items-center border border-[#a0a0a0] px-[5px]">
                            <svg viewBox="0 0 6 3" className="h-[3px] w-1.5 fill-[#3399ff]" aria-hidden="true"><path d="M0 0H6L3 3Z" /></svg>
                            <div className="mx-1 h-px flex-1 bg-[repeating-linear-gradient(90deg,#3399ff_0_1px,transparent_1px_3px)]" />
                            <svg viewBox="0 0 6 3" className="h-[3px] w-1.5 fill-[#3399ff]" aria-hidden="true"><path d="M0 0H6L3 3Z" /></svg>
                        </div>
                    </div>

                    <div className="flex h-[81px] justify-center gap-1.5 pr-[5px]">
                        <div className="flex gap-[3px]">
                            <ChannelGroup />
                            <div className="pt-px">
                                <Group title="Частота" color="text-[#000080]" className="w-[104px]">
                                    <FreqKnob />
                                </Group>
                            </div>
                        </div>
                        <div className="flex gap-1.5 pt-px">
                            <SyncGroup />
                            <ControlGroup />
                            <Group title="Таймеры" color="text-[#000080]" className="w-[67px]">
                                <div className="flex flex-col gap-0.5 pt-[3px] pl-2">
                                    <TimerButton label="Таймер старта" />
                                    <TimerButton label="Таймер остановки" out />
                                </div>
                            </Group>
                        </div>
                    </div>
                </div>

                <div className="flex h-[19px] gap-0.5 pt-0.5 pl-px">
                    <div className={`flex w-[189px] items-center gap-1 border-t border-r border-t-[#a0a0a0] border-r-white pl-[3px] text-[11px] whitespace-nowrap ${tahoma}`}>
                        USB Осциллограф<span className={ui}>2.01.3201</span>
                    </div>
                    <div className="flex-1 border-t border-l border-[#a0a0a0]" />
                    <div className={`w-12 border-t border-l border-[#a0a0a0] pl-0.5 text-[11px] leading-4 ${tahoma}`}>1.9</div>
                </div>

                <div className="flex h-1 border-t border-[#303840] bg-linear-to-r from-[#6f93b8] via-[#a8c4e0] to-[#8fa9c4]">
                    <div className="ml-[308px] w-[54px] rounded-t-[2px] bg-white" />
                </div>
            </div>
        </div>
    );
};

export default App;
